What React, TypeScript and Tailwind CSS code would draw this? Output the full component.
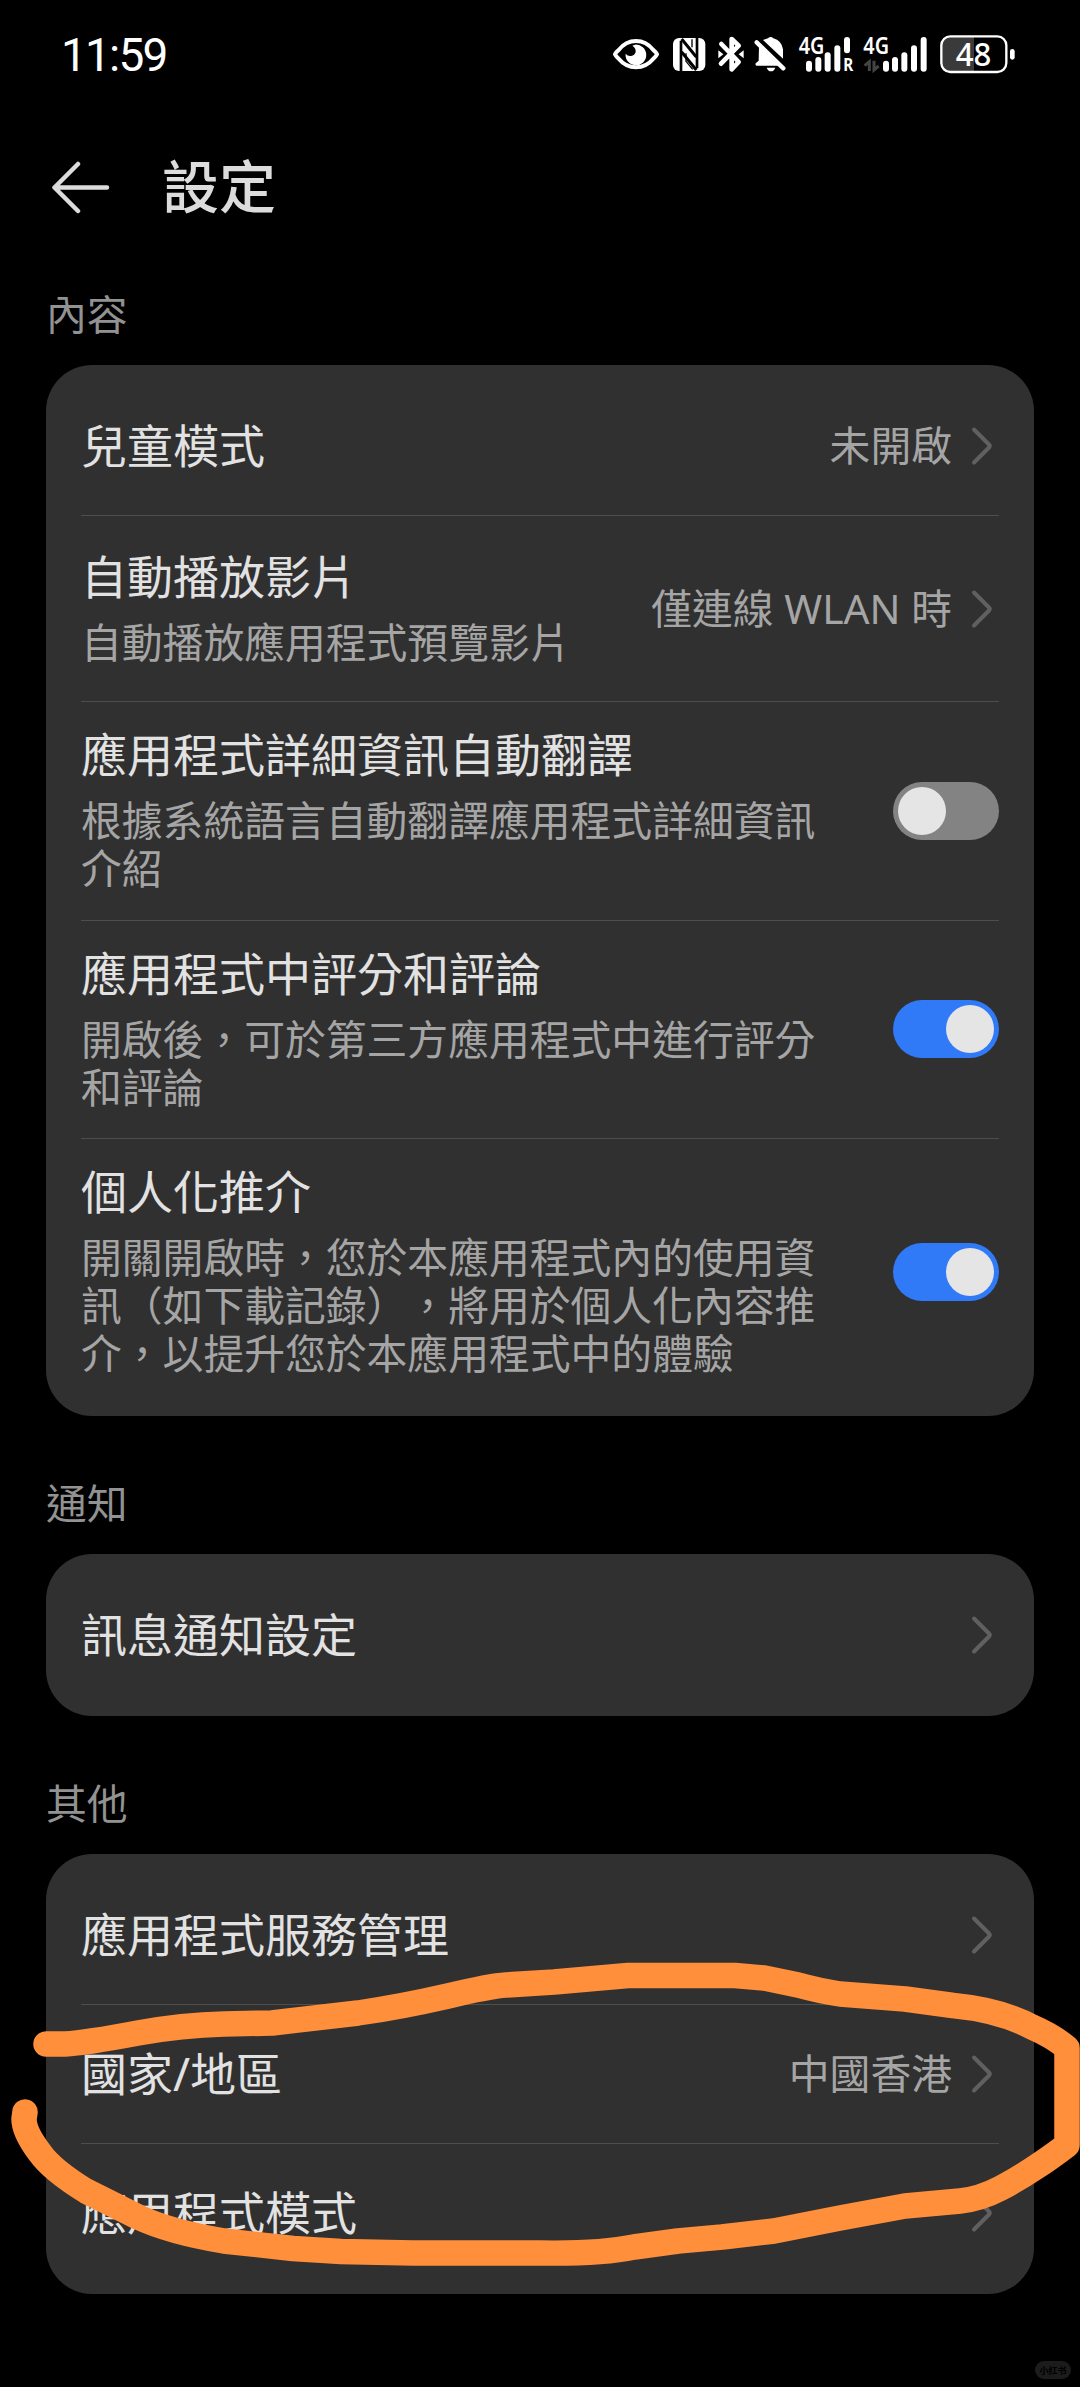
import React, { useState } from 'react';

type Item = {
  title: string;
  desc?: string;
  value?: string;
  toggle?: boolean;
};

const SECTIONS: { label: string; items: Item[] }[] = [
  {
    label: '內容',
    items: [
      { title: '兒童模式', value: '未開啟' },
      { title: '自動播放影片', desc: '自動播放應用程式預覽影片', value: '僅連線 WLAN 時' },
      { title: '應用程式詳細資訊自動翻譯', desc: '根據系統語言自動翻譯應用程式詳細資訊介紹', toggle: false },
      { title: '應用程式中評分和評論', desc: '開啟後，可於第三方應用程式中進行評分和評論', toggle: true },
      {
        title: '個人化推介',
        desc: '開關開啟時，您於本應用程式內的使用資訊（如下載記錄），將用於個人化內容推介，以提升您於本應用程式中的體驗',
        toggle: true,
      },
    ],
  },
  { label: '通知', items: [{ title: '訊息通知設定' }] },
  {
    label: '其他',
    items: [
      { title: '應用程式服務管理' },
      { title: '國家/地區', value: '中國香港' },
      { title: '應用程式模式' },
    ],
  },
];

const Bars: React.FC<{ xs: number[]; short?: boolean }> = ({ xs, short }) => (
  <>
    {[122, 111, 97, 76, 51].map((top, i) => (
      <rect key={i} x={xs[i] - 9} y={top} width="18" height={(short && i === 4 ? 100 : 155) - top} rx="9" />
    ))}
  </>
);

const StatusIcons = () => (
  <svg viewBox="0 0 1350 210" className="w-[450px] h-[70px] shrink-0 font-['Noto_Sans',sans-serif]" fill="#fff">
    {/* eye */}
    <path d="M75 103 Q76 99 86 90 C114 54 162 54 190 90 Q200 99 201 103 Q200 107 190 116 C162 150 114 150 86 116 Q76 107 75 103Z" fill="none" stroke="#fff" strokeWidth="12" strokeLinejoin="round" />
    <path d="M135 74 A31 31 0 1 1 107 101 A17 17 0 0 0 137 96 A20 20 0 0 0 127 77Z" />
    {/* nfc */}
    <rect x="249" y="54" width="97" height="99" rx="18" />
    <path d="M273 153 V62 M321 54 V145" fill="none" stroke="#000" strokeWidth="8" />
    <path d="M275 57 L319 111 M275 96 L319 150" fill="none" stroke="#000" strokeWidth="9" />
    <path d="M288 100 V124 L308 148 M306 58 V82" fill="none" stroke="#000" strokeWidth="4" />
    {/* bluetooth */}
    <path d="M394 72 L446 126 L425 148 V57 L446 77 L393 131" fill="none" stroke="#fff" strokeWidth="14" strokeLinecap="round" strokeLinejoin="round" />
    <path d="M385 91 L400 103 L385 115Z M461 91 L446 103 L461 115Z" />
    {/* muted bell */}
    <path d="M519 60 Q528 57 534 55 Q542 47 550 55 Q575 62 579 88 V116Z" />
    <path d="M507 79 L566 137 H499 Q493 132 499 128 L506 122Z" />
    <path d="M530 143 H556 Q552 154 543 154 Q534 154 530 143Z" />
    <path d="M500 67 L580 145" stroke="#fff" strokeWidth="13" strokeLinecap="round" />
    {/* sim 1 */}
    <text x="626" y="102" fontSize="69" fontWeight="600" textLength="77" lengthAdjust="spacingAndGlyphs">4G</text>
    <Bars xs={[657, 685, 713, 742, 771]} short />
    <text x="760" y="154" fontSize="55" fontWeight="700" textLength="30" lengthAdjust="spacingAndGlyphs">R</text>
    {/* sim 2 */}
    <text x="820" y="102" fontSize="69" fontWeight="600" textLength="77" lengthAdjust="spacingAndGlyphs">4G</text>
    <path d="M838 153 V125 L824 137 M852 122 V150 L866 138" fill="none" stroke="#444" strokeWidth="9" />
    <Bars xs={[888, 915, 943, 972, 1001]} />
    {/* battery */}
    <path d="M1152 50 H1076 Q1055 50 1055 72 V132 Q1055 154 1076 154 H1152Z" fill="#3a3a3a" />
    <rect x="1054" y="49" width="195" height="107" rx="27" fill="none" stroke="#fff" strokeWidth="7" />
    <rect x="1260" y="87" width="14" height="32" rx="7" />
    <text x="1097" y="139" fontSize="99" fontWeight="500" textLength="107" lengthAdjust="spacingAndGlyphs">48</text>
  </svg>
);

const Chevron = () => (
  <svg viewBox="0 0 24 40" className="w-6 h-10 shrink-0" fill="none" stroke="#606060" strokeWidth="4" strokeLinecap="round" strokeLinejoin="round">
    <path d="M3 3.5 L18 18.5 Q19.5 20 18 21.5 L3 36.5" />
  </svg>
);

const Switch: React.FC<{ initial: boolean }> = ({ initial }) => {
  const [on, setOn] = useState(initial);
  return (
    <button
      onClick={() => setOn(!on)}
      className={`flex items-center w-[106px] h-[58px] px-[5px] rounded-full shrink-0 ${on ? 'bg-[#317af7] justify-end' : 'bg-[#838383] justify-start'}`}
    >
      <span className="w-12 h-12 rounded-full bg-[#e5e5e5]" />
    </button>
  );
};

const Row: React.FC<{ item: Item; height: string }> = ({ item, height }) => (
  <div className={`flex items-center justify-between ${height}`}>
    <div className="flex flex-col gap-[15px] max-w-[750px] pb-0.5">
      <div className="text-[46px] leading-[54px] text-[#e2e2e2] whitespace-nowrap">{item.title}</div>
      {item.desc && <div className="text-[40.8px] leading-[48px] text-[#a5a5a5] [text-spacing-trim:space-all]">{item.desc}</div>}
    </div>
    {item.toggle !== undefined ? (
      <Switch initial={item.toggle} />
    ) : (
      <div className="flex items-center gap-[19px] pr-1">
        {item.value && <span className="pb-0.5 text-[40.8px] leading-[48px] text-[#a5a5a5] whitespace-nowrap">{item.value}</span>}
        <Chevron />
      </div>
    )}
  </div>
);

const rowHeight = (item: Item) => {
  if (!item.desc) return 'h-[138px]';
  if (item.desc.length > 36) return 'h-[265px]';
  return item.desc.length > 18 ? 'h-[217.5px]' : 'h-[185px]';
};

// hand-drawn ring around the region entry
const Marker = () => (
  <svg viewBox="0 0 1080 2387" className="absolute inset-0 w-[1080px] h-[2387px] pointer-events-none" fill="none" stroke="#ff8f3b" strokeWidth="25.500" strokeLinecap="round" strokeLinejoin="round">
    <path d="M46 2044 L65 2044 Q85 2043 138 2033 Q182 2025 224 2024 L272 2023 L358 2013 Q400 2007 448 1996 Q490 1986 506 1985 L554 1982 L628 1975.5 H735 L764 1978 L798 1985 Q820 1991 840 1994 L905 1999 L953 2005.5 Q1000 2010 1032 2027 Q1053 2036 1067 2048 V2145 Q1050 2158 1036 2167 Q1018 2179 1001 2188 Q980 2199 960 2201 L905 2206 L840 2218 L774 2231 L722 2237 L678 2241 L634 2247 Q600 2254 540 2253 H413 L341 2251.500 L293 2248.500 L224 2241 Q170 2232 138 2217 L86 2191 Q52 2170 40 2153 Q24 2132 24 2119 L25 2112" />
  </svg>
);

export default function App() {
  return (
    <div lang="zh-Hant" className="relative flex flex-col w-[1080px] h-[2387px] bg-black overflow-hidden font-['Noto_Sans','Noto_Sans_CJK_TC',sans-serif]">
      <div className="flex justify-between pt-5 pl-[61px] pr-10 h-[110px]">
        <div className="font-['Roboto',sans-serif] text-[46px] leading-[70px] tracking-[-1.8px] text-white">11:59</div>
        <StatusIcons />
      </div>

      <div className="flex items-center gap-[52px] h-[156px] pl-[50px]">
        <svg viewBox="0 0 60 54" className="w-[60px] h-[54px]" fill="none" stroke="#dcdcdc" strokeWidth="4.500" strokeLinecap="round" strokeLinejoin="round">
          <path d="M28 3 L4.500 26.500 L28 50 M4.500 26.500 H57" />
        </svg>
        <h1 className="pb-1 text-[57px] leading-[70px] font-medium text-[#dcdcdc]">設定</h1>
      </div>

      {SECTIONS.map(section => (
        <section key={section.label} className="mb-[39px] px-[46px]">
          <h2 className="h-[99px] pt-6 text-[40.8px] leading-[48px] text-[#929292]">{section.label}</h2>
          <div className="py-3 px-[35px] rounded-[46px] bg-[#303030]">
            {section.items.map((item, i) => (
              <React.Fragment key={item.title}>
                {i > 0 && <div className="h-px bg-[#4e4e4e]" />}
                <Row item={item} height={rowHeight(item)} />
              </React.Fragment>
            ))}
          </div>
        </section>
      ))}

      <Marker />
      <div className="absolute right-[9px] bottom-2 flex items-center justify-center w-9 h-[18px] rounded-full bg-[#1c1c1c] text-[9px] leading-none font-bold text-black font-['Noto_Sans_CJK_SC',sans-serif]">
        小红书
      </div>
    </div>
  );
}
